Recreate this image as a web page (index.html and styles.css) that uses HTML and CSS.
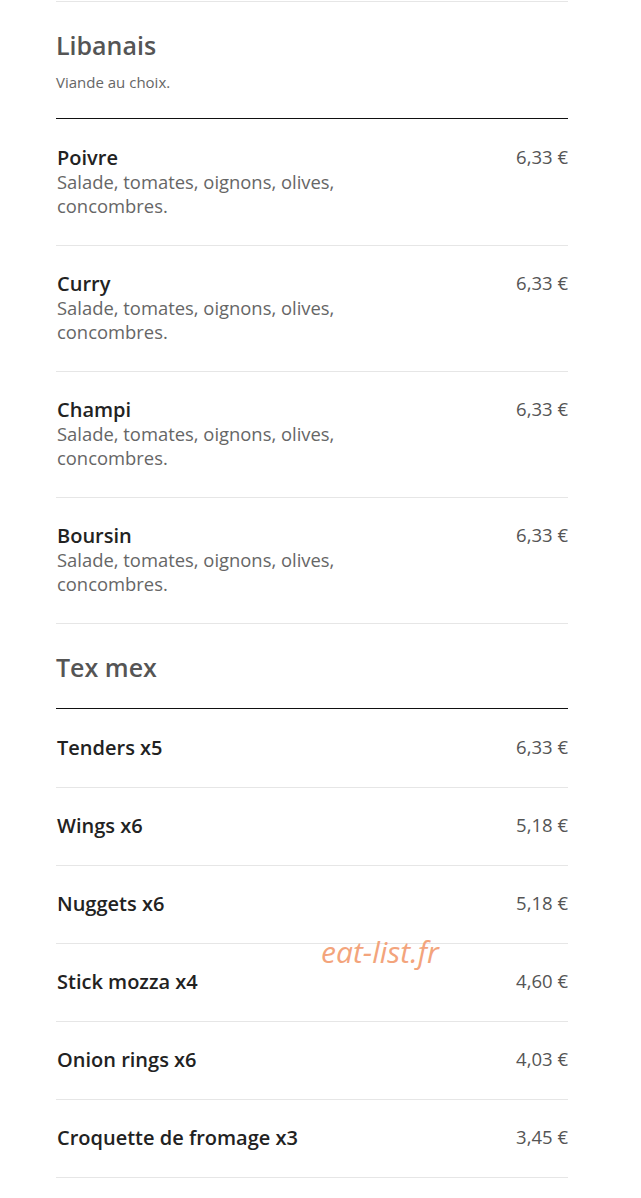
FILE: index.html
```html
<!DOCTYPE html>
<html lang="fr">
<head>
    <meta charset="UTF-8">
    <meta name="viewport" content="width=device-width, initial-scale=1.0">
    <title>Carte</title>
    <link rel="stylesheet" href="styles.css">
</head>
<body>
    <div class="menu">

        <!-- Libanais -->
        <section class="menu-section">
            <div class="section-head">
                <h2>Libanais</h2>
                <p class="section-desc">Viande au choix.</p>
            </div>
            <ul class="items">
                <li class="item">
                    <div class="item-info">
                        <span class="item-name">Poivre</span>
                        <p class="item-desc">Salade, tomates, oignons, olives, concombres.</p>
                    </div>
                    <span class="item-price">6,33 €</span>
                </li>
                <li class="item">
                    <div class="item-info">
                        <span class="item-name">Curry</span>
                        <p class="item-desc">Salade, tomates, oignons, olives, concombres.</p>
                    </div>
                    <span class="item-price">6,33 €</span>
                </li>
                <li class="item">
                    <div class="item-info">
                        <span class="item-name">Champi</span>
                        <p class="item-desc">Salade, tomates, oignons, olives, concombres.</p>
                    </div>
                    <span class="item-price">6,33 €</span>
                </li>
                <li class="item">
                    <div class="item-info">
                        <span class="item-name">Boursin</span>
                        <p class="item-desc">Salade, tomates, oignons, olives, concombres.</p>
                    </div>
                    <span class="item-price">6,33 €</span>
                </li>
            </ul>
        </section>

        <!-- Tex mex -->
        <section class="menu-section">
            <div class="section-head">
                <h2>Tex mex</h2>
            </div>
            <ul class="items">
                <li class="item">
                    <div class="item-info"><span class="item-name">Tenders x5</span></div>
                    <span class="item-price">6,33 €</span>
                </li>
                <li class="item">
                    <div class="item-info"><span class="item-name">Wings x6</span></div>
                    <span class="item-price">5,18 €</span>
                </li>
                <li class="item">
                    <div class="item-info"><span class="item-name">Nuggets x6</span></div>
                    <span class="item-price">5,18 €</span>
                </li>
                <li class="item">
                    <div class="item-info"><span class="item-name">Stick mozza x4</span></div>
                    <span class="item-price">4,60 €</span>
                </li>
                <li class="item">
                    <div class="item-info"><span class="item-name">Onion rings x6</span></div>
                    <span class="item-price">4,03 €</span>
                </li>
                <li class="item">
                    <div class="item-info"><span class="item-name">Croquette de fromage x3</span></div>
                    <span class="item-price">3,45 €</span>
                </li>
            </ul>
        </section>

        <!-- watermark -->
        <span class="watermark">eat-list.fr</span>
    </div>
</body>
</html>
```

FILE: styles.css
```css
body {
    font-family: "Open Sans", "Liberation Sans", sans-serif;
    margin: 0;
    padding: 0;
    background-color: #fff;
}
.menu {
    position: relative;
    width: 512px;
    margin: 1px 0 0 56px;
    border-top: 1px solid #e6e6e6;
}
.section-head {
    padding: 28px 0 26px;
    border-bottom: 1px solid #111;
}
.section-head h2 {
    margin: 0;
    font-size: 25px;
    line-height: 30px;
    font-weight: 600;
    color: #555;
}
.section-desc {
    margin: 12px 0 0;
    font-size: 15px;
    line-height: 20px;
    color: #666;
}
.items {
    list-style: none;
    margin: 0;
    padding: 1px 0 0;
}
.item {
    display: flex;
    justify-content: space-between;
    align-items: flex-start;
    padding: 26px 0 27px 1px;
    border-bottom: 1px solid #e6e6e6;
}
.item-info {
    width: 320px;
}
.item-name {
    display: block;
    font-size: 20px;
    line-height: 24px;
    font-weight: 600;
    color: #222;
}
.item-desc {
    margin: 0;
    font-size: 18.4px;
    line-height: 24px;
    color: #666;
}
.item-price {
    font-size: 18.5px;
    line-height: 22px;
    font-weight: 500;
    color: #555;
}
.watermark {
    position: absolute;
    left: 265px;
    top: 929px;
    font-size: 30px;
    font-style: italic;
    color: #f3a47c;
    pointer-events: none;
}
```
